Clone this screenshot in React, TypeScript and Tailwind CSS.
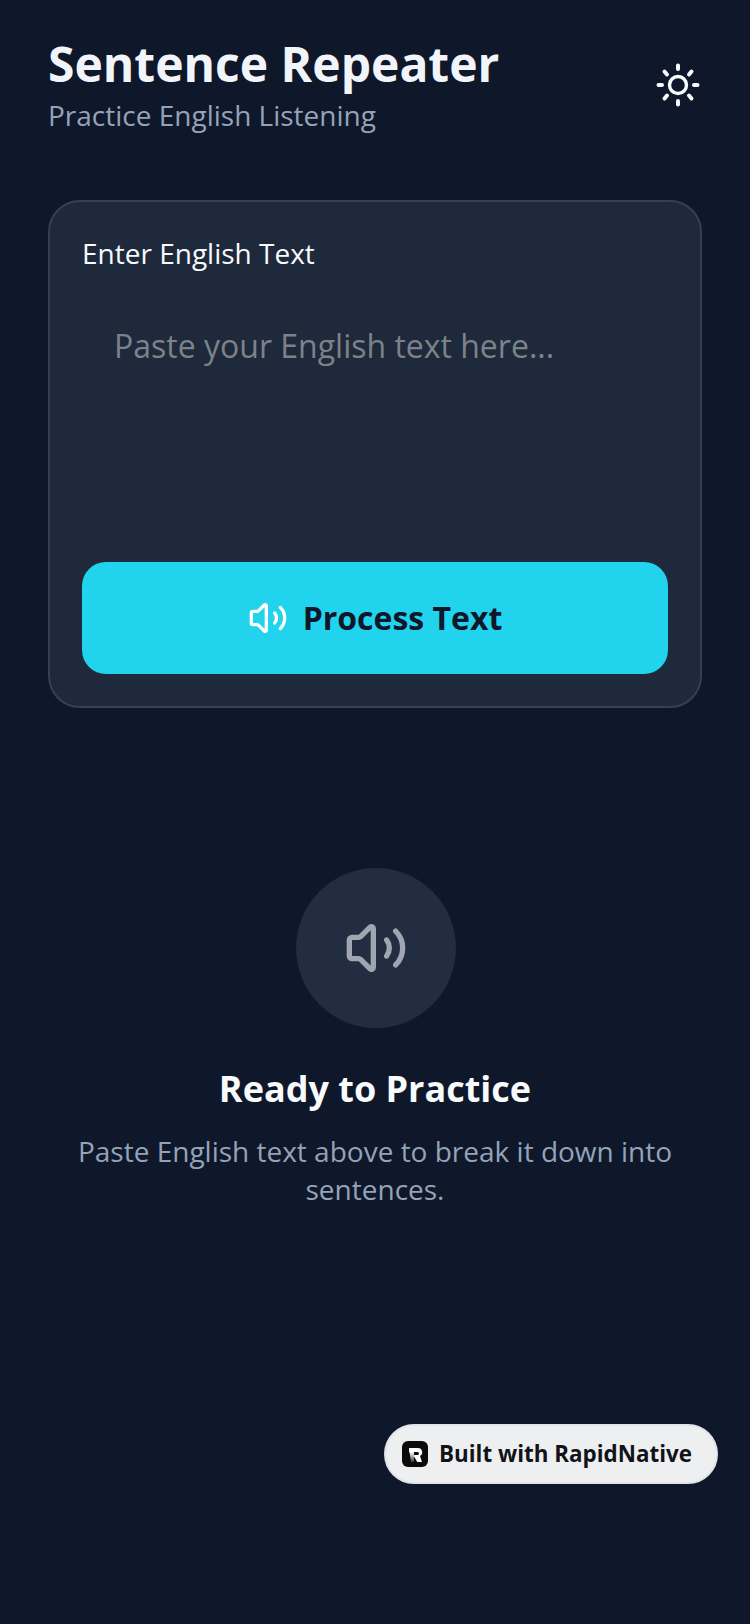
import { Volume2 } from "lucide-react";

function SunIcon() {
  return (
    <svg width="48" height="48" viewBox="0 0 48 48" fill="none" stroke="#f8fafc" strokeLinecap="round" className="mt-[3px]">
      <circle cx="24" cy="24" r="8.5" strokeWidth="3.4" />
      <path
        d="M24 4.500v3.500M24 40v3.500M4.500 24h3.500M40 24h3.500M10.500 10.500l2.500 3M37.500 10.500l-2.500 3M10.500 37.500l2.500-3M37.500 37.500l-2.500-3"
        strokeWidth="4"
      />
    </svg>
  );
}

function RapidNativeLogo() {
  return (
    <svg width="26" height="26" viewBox="0 0 26 26" className="shrink-0">
      <defs>
        <linearGradient id="rn-stem" x1="0" y1="0" x2="0" y2="1">
          <stop offset="0" stopColor="#fff" />
          <stop offset="1" stopColor="#3a3a3a" />
        </linearGradient>
      </defs>
      <rect width="26" height="26" rx="6" fill="#0b0b0c" />
      <path d="M7 7h9a4.200 4.200 0 0 1 2 7.900L20 21h-4.800l-4-7H15.500a1.400 1.400 0 0 0 0-3H7z" fill="#fff" />
      <path d="M7.500 11h4.500v10H9z" fill="url(#rn-stem)" />
    </svg>
  );
}

export default function App() {
  return (
    <div className="relative h-[1624px] w-full overflow-hidden bg-[#0f172a] font-['Open_Sans',sans-serif]">
      <div className="flex flex-col px-12 pt-[32px]">
        {/* Header */}
        <div className="flex items-center justify-between">
          <div className="flex flex-col">
            <h1 className="text-[48px] leading-[64px] font-bold text-[#f1f5f9]">Sentence Repeater</h1>
            <p className="text-[28px] leading-[38px] text-[#94a3b8]">Practice English Listening</p>
          </div>
          <SunIcon />
        </div>

        {/* Input card */}
        <div className="mt-[66px] flex flex-col rounded-[32px] border-2 border-[#334155] bg-[#1e293b] p-8">
          <label className="text-[28px] leading-[38px] text-[#f8fafc]">Enter English Text</label>
          <textarea
            className="mt-[44px] h-[246px] resize-none bg-transparent px-8 py-[8px] text-[32px] leading-[44px] text-white outline-none placeholder:text-[#7d8289]"
            placeholder="Paste your English text here..."
          />
          <button className="flex h-[112px] items-center justify-center gap-[15px] rounded-3xl bg-[#22d3ee]">
            <Volume2 className="h-10 w-10 text-white" strokeWidth={2} />
            <span className="text-[32px] leading-[44px] font-bold text-[#0f172a]">Process Text</span>
          </button>
        </div>

        {/* Empty state */}
        <div className="mt-[160px] flex flex-col items-center">
          <div className="ml-[2px] flex h-40 w-40 items-center justify-center rounded-full bg-[#222d41]">
            <Volume2 className="h-16 w-16 text-[#a0a6b1]" strokeWidth={2} />
          </div>
          <h2 className="mt-[37px] text-[36px] leading-[48px] font-bold text-[#f8fafc]">Ready to Practice</h2>
          <p className="mt-[19px] max-w-[620px] text-center text-[28px] leading-[38px] text-[#94a3b8]">
            Paste English text above to break it down into sentences.
          </p>
        </div>
      </div>

      {/* Badge */}
      <div className="absolute top-[1424px] left-[384px] flex h-[60px] w-[334px] items-center gap-[11px] rounded-full border-2 border-[#e2e4e8] bg-[#eeeff1] pl-[16px]">
        <RapidNativeLogo />
        <span className="text-[22.4px] leading-[32px] font-bold text-[#111318]">Built with RapidNative</span>
      </div>
    </div>
  );
}
